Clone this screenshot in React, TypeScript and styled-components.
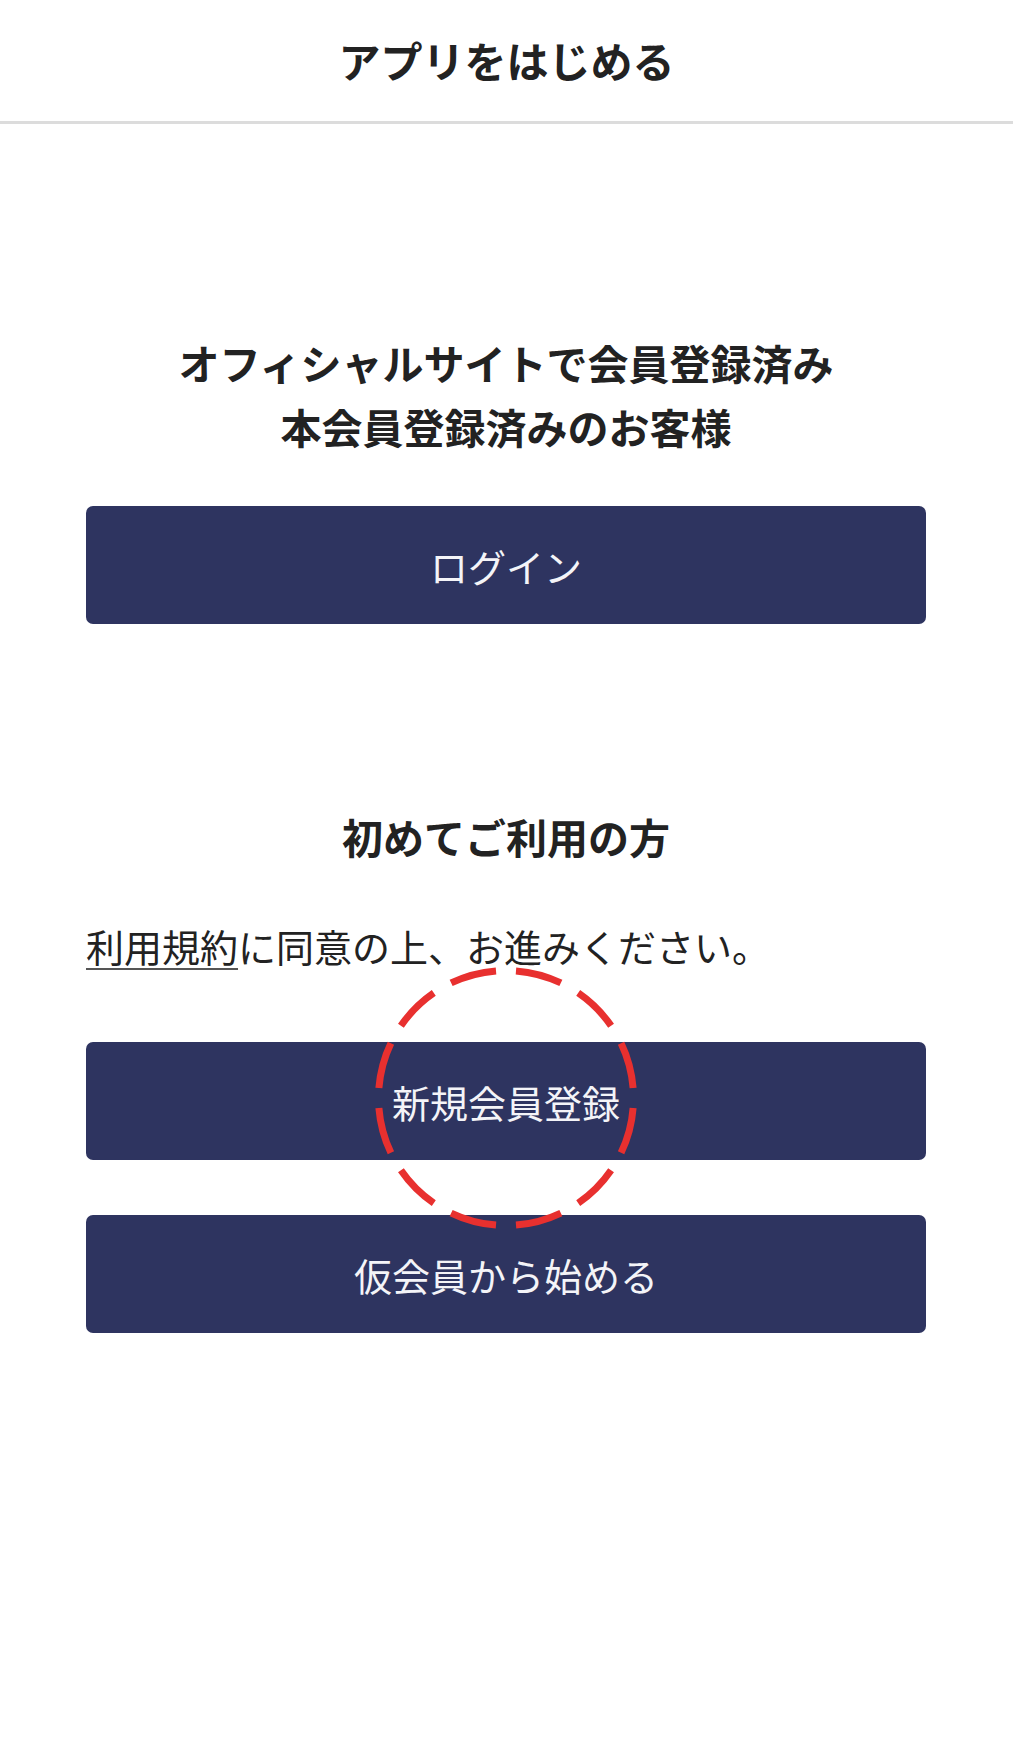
import React from "react";
import styled, { createGlobalStyle } from "styled-components";

const GlobalStyle = createGlobalStyle`
  html, body {
    margin: 0;
    padding: 0;
    background: #ffffff;
  }
  body {
    font-family: "Noto Sans CJK JP", "Noto Sans", sans-serif;
    color: #222222;
    -webkit-font-smoothing: antialiased;
  }
  * { box-sizing: border-box; }
`;

const Page = styled.div`
  width: 1013px;
  min-height: 1751px;
  background: #ffffff;
  display: flex;
  flex-direction: column;
`;

const Header = styled.header`
  height: 124px;
  border-bottom: 3px solid #dcdcdc;
  display: flex;
  align-items: center;
  justify-content: center;
  padding-bottom: 2px;
`;

const Title = styled.h1`
  margin: 0;
  font-size: 42px;
  font-weight: 700;
  color: #222222;
  letter-spacing: 0;
`;

const Main = styled.main`
  display: flex;
  flex-direction: column;
  padding: 0 87px 0 86px;
`;

const Heading = styled.h2<{ $top: number }>`
  margin: ${(p) => p.$top}px 0 0;
  font-size: 41px;
  line-height: 64px;
  font-weight: 700;
  text-align: center;
  color: #222222;
`;

const Note = styled.p`
  margin: 46px 0 0;
  font-size: 38px;
  line-height: 64px;
  font-weight: 400;
  color: #222222;
`;

const TermsLink = styled.a`
  color: #222222;
  text-decoration: underline;
  text-decoration-thickness: 2px;
  text-underline-offset: 6px;
  text-decoration-color: #555555;
`;

const Button = styled.button<{ $top: number }>`
  margin-top: ${(p) => p.$top}px;
  width: 100%;
  height: 118px;
  border: none;
  border-radius: 7px;
  background: #2e3460;
  color: #f4f4f8;
  font-family: "Noto Sans CJK JP", "Noto Sans", sans-serif;
  font-size: 38px;
  font-weight: 400;
  display: flex;
  align-items: center;
  justify-content: center;
  padding: 0;
  cursor: pointer;
`;

const Highlight = styled.div`
  position: relative;
  display: flex;
  flex-direction: column;
`;

const DashedRing = styled.svg`
  position: absolute;
  left: 50%;
  margin-left: -131px;
  width: 262px;
  height: 262px;
  pointer-events: none;
  overflow: visible;
`;

export default function App() {
  return (
    <>
      <GlobalStyle />
      <Page>
        <Header>
          <Title>アプリをはじめる</Title>
        </Header>
        <Main>
          <Heading $top={206}>
            オフィシャルサイトで会員登録済み
            <br />
            本会員登録済みのお客様
          </Heading>
          <Button $top={48}>ログイン</Button>

          <Heading $top={180}>初めてご利用の方</Heading>
          <Note>
            <TermsLink href="#">利用規約</TermsLink>に同意の上、お進みください。
          </Note>

          <Highlight>
            <Button $top={64}>新規会員登録</Button>
            <DashedRing viewBox="0 0 262 262" style={{ top: -75 + 64 }}>
              <circle
                cx="131"
                cy="131"
                r="127.5"
                fill="none"
                stroke="#e8302f"
                strokeWidth="7"
                pathLength={1200}
                strokeDasharray="70 30"
                strokeDashoffset={-15}
              />
            </DashedRing>
          </Highlight>
          <Button $top={55}>仮会員から始める</Button>
        </Main>
      </Page>
    </>
  );
}
